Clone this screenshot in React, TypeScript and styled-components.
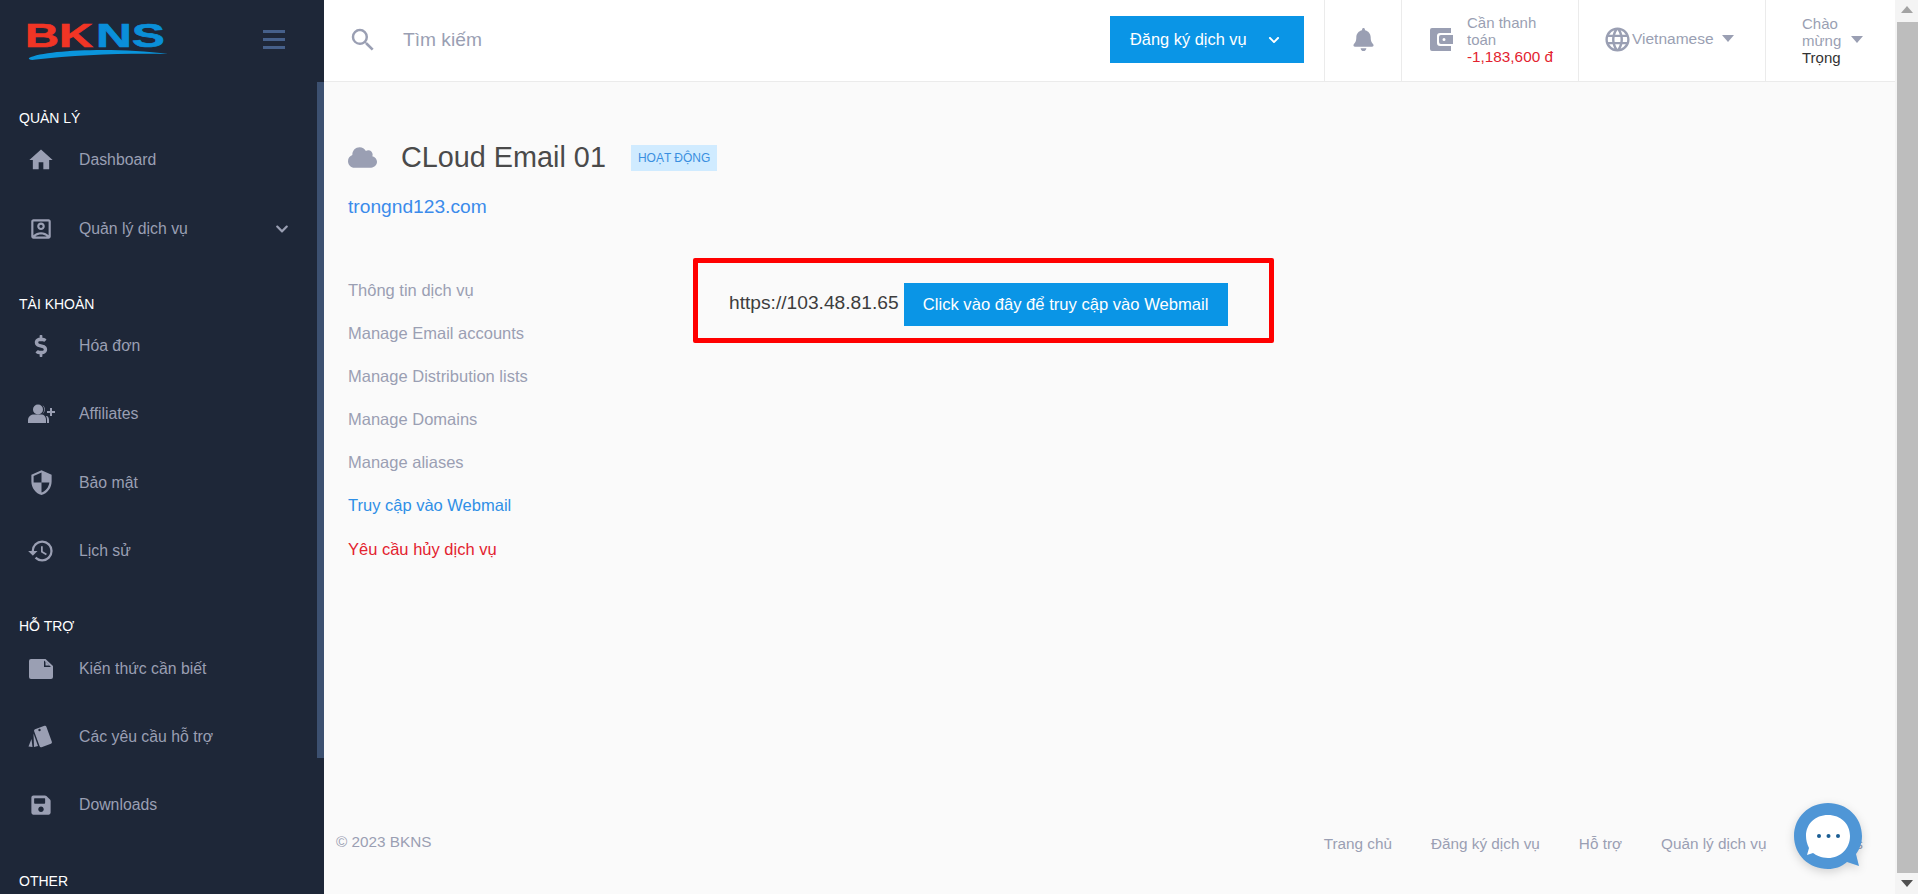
import React, { ReactNode } from "react";
import styled, { createGlobalStyle } from "styled-components";
import {
  FaBell,
  FaChevronDown,
  FaCloud,
  FaDollarSign,
  FaSave,
} from "react-icons/fa";
import {
  MdHistory,
  MdHome,
  MdLanguage,
  MdOutlineAccountBox,
  MdSearch,
  MdSecurity,
} from "react-icons/md";

// ========= Icons drawn by hand ==========
const AffiliatesIcon = () => (
  <svg width="28" height="20" viewBox="0 0 28 20" fill="currentColor">
    <circle cx="11" cy="5.5" r="5" />
    <path d="M1 19v-3c0-3.500 3-5.500 6-5.500h7c3 0 5 2 5 5.500v3H1z" />
    <path d="M15.500 1.200a5 5 0 0 1 0 8.500a6 6 0 0 0 0-8.500zM20 12c1.500 1 2 2.500 2 4v3h-2v-3.500c0-1.300-.3-2.500-1-3.500z" />
    <path d="M23 4h2v3h3v2h-3v3h-2V9h-3V7h3z" />
  </svg>
);

const NoteIcon = () => (
  <svg width="24" height="20" viewBox="0 0 24 20" fill="currentColor">
    <path d="M2 0h14.500L24 7v11a2 2 0 0 1-2 2H2a2 2 0 0 1-2-2V2a2 2 0 0 1 2-2z" />
    <path d="M15 1.500l0 6.500h7z" fill="#1e2738" />
    <path d="M16.500 2.500v4h4z" fill="currentColor" />
  </svg>
);

const CardsIcon = () => (
  <svg width="26" height="24" viewBox="0 0 26 24" fill="currentColor">
    <rect x="8.500" y="2" width="13" height="19" rx="1.500" transform="rotate(-20 15 11.500)" />
    <circle cx="11.500" cy="5" r="1.200" fill="#1e2738" />
    <path d="M5.500 8.500l4.500 12.500-4 1z" />
    <path d="M3.500 14l1 8-4-.5z" />
  </svg>
);

const WalletIcon = () => (
  <svg width="23" height="23" viewBox="0 0 23 23" fill="currentColor">
    <path d="M2 0h19v5H10a3 3 0 0 0-3 3v7a3 3 0 0 0 3 3h11v5H2a2 2 0 0 1-2-2V2a2 2 0 0 1 2-2z" />
    <path d="M11 7h12v9H11a2 2 0 0 1-2-2V9a2 2 0 0 1 2-2zm3 3a1.500 1.500 0 1 0 0 3 1.500 1.500 0 0 0 0-3z" />
  </svg>
);

const Logo = () => (
  <svg width="145" height="46" viewBox="0 0 145 46">
    <text
      x="0"
      y="29.5"
      fontFamily="'Liberation Sans', Arial, sans-serif"
      fontWeight="700"
      fontSize="33"
      textLength="68"
      lengthAdjust="spacingAndGlyphs"
      fill="#f13525"
      stroke="#f13525"
      strokeWidth="0.6"
    >
      BK
    </text>
    <text
      x="71"
      y="29.5"
      fontFamily="'Liberation Sans', Arial, sans-serif"
      fontWeight="700"
      fontSize="33"
      textLength="69"
      lengthAdjust="spacingAndGlyphs"
      fill="#0a8fd9"
      stroke="#0a8fd9"
      strokeWidth="0.6"
    >
      NS
    </text>
    <path d="M4 41C20 33 90 30 143 37C100 36 50 38 11 42.500C6 43.500 3 42.500 4 41z" fill="#0a95dc" />
  </svg>
);

const ChatBubble = () => (
  <svg width="70" height="68" viewBox="0 0 70 68">
    <path
      d="M34 0C53 0 68 14 68 33C68 41 65 47 62 51L65 63L53 59C47 64 41 66 34 66C15 66 0 52 0 33C0 14 15 0 34 0z"
      fill="#4f96d6"
    />
    <path
      d="M34 12C47 12 56 21 56 33C56 45 47 55 34 55C27 55 22 52 19 50L13 52L15 45C13 41 12 37 12 33C12 21 21 12 34 12z"
      fill="#fff"
    />
    <circle cx="25" cy="33" r="2" fill="#1b5e94" />
    <circle cx="34.500" cy="33" r="2" fill="#1b5e94" />
    <circle cx="44" cy="33" r="2" fill="#1b5e94" />
  </svg>
);

// ========= Page data ==========
interface NavEntry {
  label: string;
  icon: ReactNode;
  expandable?: boolean;
}

const NAV_SECTIONS: { title: string; items: NavEntry[] }[] = [
  {
    title: "QUẢN LÝ",
    items: [
      { label: "Dashboard", icon: <MdHome size={28} /> },
      {
        label: "Quản lý dịch vụ",
        icon: <MdOutlineAccountBox size={26} />,
        expandable: true,
      },
    ],
  },
  {
    title: "TÀI KHOẢN",
    items: [
      { label: "Hóa đơn", icon: <FaDollarSign size={22} /> },
      { label: "Affiliates", icon: <AffiliatesIcon /> },
      { label: "Bảo mật", icon: <MdSecurity size={27} /> },
      { label: "Lịch sử", icon: <MdHistory size={28} /> },
    ],
  },
  {
    title: "HỖ TRỢ",
    items: [
      { label: "Kiến thức cần biết", icon: <NoteIcon /> },
      { label: "Các yêu cầu hỗ trợ", icon: <CardsIcon /> },
      { label: "Downloads", icon: <FaSave size={22} /> },
    ],
  },
  { title: "OTHER", items: [] },
];

const SERVICE_LINKS = [
  "Thông tin dịch vụ",
  "Manage Email accounts",
  "Manage Distribution lists",
  "Manage Domains",
  "Manage aliases",
];

const FOOTER_LINKS = [
  "Trang chủ",
  "Đăng ký dịch vụ",
  "Hỗ trợ",
  "Quản lý dịch vụ",
  "Affiliates",
];

/**
 * Service detail page of the customer area
 */
const App = () => {
  return (
    <StyledPage>
      <GlobalStyle />

      {/* Start sidebar */}
      <StyledSidebar>
        <StyledBrand>
          <Logo />
          <StyledBurger>
            <span />
            <span />
            <span />
          </StyledBurger>
        </StyledBrand>

        {NAV_SECTIONS.map((section) => (
          <StyledNavSection key={section.title}>
            <StyledNavTitle>{section.title}</StyledNavTitle>
            {section.items.map((item) => (
              <StyledNavItem key={item.label}>
                <StyledNavIcon>{item.icon}</StyledNavIcon>
                <StyledNavLabel>{item.label}</StyledNavLabel>
                {item.expandable && <FaChevronDown size={14} />}
              </StyledNavItem>
            ))}
          </StyledNavSection>
        ))}
        <StyledSidebarThumb />
      </StyledSidebar>
      {/* End sidebar */}

      <StyledMain>
        {/* Start header */}
        <StyledHeader>
          <StyledSearch>
            <MdSearch size={30} />
            <span>Tìm kiếm</span>
          </StyledSearch>
          <StyledRegisterButton>
            Đăng ký dịch vụ
            <FaChevronDown size={12} />
          </StyledRegisterButton>
          <StyledBellCell>
            <FaBell size={23} />
          </StyledBellCell>
          <StyledPayCell>
            <WalletIcon />
            <StyledPayText>
              Cần thanh toán
              <StyledDebt>-1,183,600 đ</StyledDebt>
            </StyledPayText>
          </StyledPayCell>
          <StyledLanguageCell>
            <MdLanguage size={29} />
            <span>Vietnamese</span>
            <StyledCaret spacing={8} />
          </StyledLanguageCell>
          <StyledUserCell>
            <StyledUserText>
              Chào mừng
              <StyledUserName>Trọng</StyledUserName>
            </StyledUserText>
            <StyledCaret spacing={5} />
          </StyledUserCell>
        </StyledHeader>
        {/* End header */}

        {/* Start content */}
        <StyledContent>
          <StyledTitleRow>
            <FaCloud size={29} />
            <StyledTitle>CLoud Email 01</StyledTitle>
            <StyledBadge>HOẠT ĐỘNG</StyledBadge>
          </StyledTitleRow>
          <StyledDomain>trongnd123.com</StyledDomain>

          <StyledBody>
            <StyledServiceNav>
              {SERVICE_LINKS.map((link) => (
                <StyledServiceLink key={link} tone="muted">
                  {link}
                </StyledServiceLink>
              ))}
              <StyledServiceLink tone="active">Truy cập vào Webmail</StyledServiceLink>
              <StyledServiceLink tone="danger">Yêu cầu hủy dịch vụ</StyledServiceLink>
            </StyledServiceNav>

            <StyledWebmailBox>
              <StyledUrl>https://103.48.81.65</StyledUrl>
              <StyledWebmailButton>Click vào đây để truy cập vào Webmail</StyledWebmailButton>
            </StyledWebmailBox>
          </StyledBody>
        </StyledContent>
        {/* End content */}

        {/* Start footer */}
        <StyledFooter>
          <StyledCopyright>© 2023 BKNS</StyledCopyright>
          <StyledFooterLinks>
            {FOOTER_LINKS.map((link) => (
              <span key={link}>{link}</span>
            ))}
          </StyledFooterLinks>
        </StyledFooter>
        {/* End footer */}

        <StyledChatButton>
          <ChatBubble />
        </StyledChatButton>
      </StyledMain>

      {/* Page scrollbar */}
      <StyledScrollbar>
        <StyledArrow direction="up" />
        <StyledScrollThumb />
        <StyledArrow direction="down" />
      </StyledScrollbar>
    </StyledPage>
  );
};

export default App;

// ========= Start Styled Elements ==========
const GlobalStyle = createGlobalStyle`
  html, body {
    margin: 0;
    padding: 0;
    height: 100%;
    overflow: hidden;
    background: #fafafa;
    font-family: "Liberation Sans", Arial, sans-serif;
  }
  * {
    box-sizing: border-box;
  }
`;

const StyledPage = styled.div`
  display: flex;
  width: 1918px;
  height: 894px;
  overflow: hidden;
`;

const StyledSidebar = styled.aside`
  position: relative;
  flex: 0 0 324px;
  background: #1e2738;
  overflow: hidden;
`;

const StyledSidebarThumb = styled.div`
  position: absolute;
  top: 82px;
  right: 0;
  width: 7px;
  height: 676px;
  background: #3c5070;
`;

const StyledBrand = styled.div`
  display: flex;
  align-items: center;
  justify-content: space-between;
  height: 82px;
  padding: 0 39px 3px 25px;
`;

const StyledBurger = styled.div`
  display: flex;
  flex-direction: column;
  gap: 5px;
  width: 22px;

  span {
    height: 3px;
    background: #46608a;
  }
`;

const StyledNavSection = styled.div`
  margin-top: 33px;

  ${StyledBrand} + & {
    margin-top: 28px;
  }
`;

const StyledNavTitle = styled.div`
  height: 16px;
  padding-left: 19px;
  color: #fff;
  font-size: 14px;
  line-height: 16px;
`;

const StyledNavItem = styled.div`
  display: flex;
  align-items: center;
  height: 68.400px;
  padding: 0 35px 0 26px;
  color: #9a9fb3;
`;

const StyledNavIcon = styled.div`
  display: flex;
  align-items: center;
  justify-content: center;
  flex: 0 0 30px;
  margin-right: 23px;
`;

const StyledNavLabel = styled.span`
  flex: 1;
  font-size: 15.800px;
`;

const StyledMain = styled.main`
  position: relative;
  display: flex;
  flex: 1;
  flex-direction: column;
  min-width: 0;
`;

const StyledHeader = styled.header`
  display: flex;
  align-items: stretch;
  height: 82px;
  background: #fff;
  border-bottom: 1px solid #ebebeb;
`;

const StyledSearch = styled.div`
  display: flex;
  flex: 1;
  align-items: center;
  gap: 25px;
  padding: 0 0 1px 24px;
  color: #9a9fb3;
  font-size: 19.200px;
`;

const StyledRegisterButton = styled.button`
  display: flex;
  align-items: center;
  justify-content: space-between;
  align-self: flex-start;
  width: 194px;
  height: 47px;
  margin: 16px 20px 0 0;
  padding: 0 24px 0 20px;
  border: 0;
  background: #0a95e6;
  color: #fff;
  font-family: inherit;
  font-size: 16.400px;
`;

const StyledHeaderCell = styled.div`
  display: flex;
  flex: none;
  align-items: center;
  border-left: 1px solid #ebebeb;
  color: #9a9fb3;
  font-size: 15px;
`;

const StyledBellCell = styled(StyledHeaderCell)`
  justify-content: center;
  width: 77px;
  padding-bottom: 3px;
`;

const StyledPayCell = styled(StyledHeaderCell)`
  width: 177px;
  gap: 14px;
  padding-left: 28px;
  padding-bottom: 2px;
`;

const StyledPayText = styled.div`
  width: 100px;
  line-height: 17px;
`;

const StyledDebt = styled.div`
  color: #e3222f;
  font-size: 15.300px;
  white-space: nowrap;
`;

const StyledLanguageCell = styled(StyledHeaderCell)`
  width: 187px;
  padding-left: 24px;
  padding-bottom: 3px;
  font-size: 15.500px;
`;

const StyledUserCell = styled(StyledHeaderCell)`
  width: 130px;
  padding-left: 36px;
  padding-bottom: 1px;
`;

const StyledUserText = styled.div`
  width: 44px;
  line-height: 17px;
`;

const StyledUserName = styled.div`
  color: #333;
`;

const StyledCaret = styled.span<{ spacing: number }>`
  width: 0;
  height: 0;
  margin: 0 0 2px ${(props) => props.spacing}px;
  border-top: 7px solid #9a9fb3;
  border-left: 6px solid transparent;
  border-right: 6px solid transparent;
`;

const StyledContent = styled.section`
  flex: 1;
  padding: 62px 0 0 24px;
`;

const StyledTitleRow = styled.div`
  display: flex;
  align-items: center;
  height: 26px;
  color: #9a9fb3;
`;

const StyledTitle = styled.h1`
  margin: 0 25px 0 24px;
  color: #4a4a4a;
  font-size: 28.800px;
  font-weight: 400;
`;

const StyledBadge = styled.span`
  margin-top: 2px;
  padding: 0 7px;
  background: #d0ebff;
  color: #3a8fe0;
  font-size: 12px;
  line-height: 26px;
`;

const StyledDomain = styled.a`
  display: block;
  margin-top: 26px;
  color: #3b8beb;
  font-size: 19.200px;
  line-height: 22px;
`;

const StyledBody = styled.div`
  display: flex;
  margin-top: 40px;
`;

const StyledServiceNav = styled.nav`
  display: flex;
  flex: 0 0 345px;
  flex-direction: column;
  padding-top: 11px;
`;

const SERVICE_TONES = {
  muted: "#9a9fb3",
  active: "#2f8fe6",
  danger: "#e3222f",
};

const StyledServiceLink = styled.a<{ tone: keyof typeof SERVICE_TONES }>`
  color: ${(props) => SERVICE_TONES[props.tone]};
  font-size: 16.500px;
  line-height: 43.100px;
`;

const StyledWebmailBox = styled.div`
  display: flex;
  align-items: center;
  gap: 5px;
  width: 581px;
  height: 85px;
  padding: 8px 0 0 31px;
  border: 5px solid #ff0000;
  border-radius: 2px;
`;

const StyledUrl = styled.span`
  margin-bottom: 3px;
  color: #3d3d3d;
  font-size: 19.200px;
`;

const StyledWebmailButton = styled.button`
  width: 324px;
  height: 43px;
  padding: 0;
  border: 0;
  background: #0a95e6;
  color: #fff;
  font-family: inherit;
  font-size: 16.600px;
`;

const StyledFooter = styled.footer`
  display: flex;
  align-items: center;
  justify-content: space-between;
  padding: 0 32px 39px 12px;
  color: #9a9fb3;
  font-size: 15.300px;
`;

const StyledCopyright = styled.span`
  margin-bottom: 4px;
`;

const StyledFooterLinks = styled.div`
  display: flex;
  gap: 39px;
`;

const StyledChatButton = styled.div`
  position: absolute;
  right: 31px;
  bottom: 23px;
  display: flex;
  filter: drop-shadow(0 3px 5px rgba(0, 0, 0, 0.16));
`;

const StyledScrollbar = styled.div`
  display: flex;
  flex: 0 0 23px;
  flex-direction: column;
  align-items: flex-end;
  background: #f4f4f4;
`;

const StyledArrow = styled.div<{ direction: "up" | "down" }>`
  align-self: center;
  width: 0;
  height: 0;
  margin: ${(props) => (props.direction === "up" ? "6px 0 9px" : "7px 0")};
  border-left: 6px solid transparent;
  border-right: 6px solid transparent;
  border-bottom: ${(props) => (props.direction === "up" ? "7px solid #a3a3a3" : "0")};
  border-top: ${(props) => (props.direction === "down" ? "7px solid #505050" : "0")};
`;

const StyledScrollThumb = styled.div`
  flex: 1;
  width: 21px;
  background: #bdbdbd;
`;
// ========= End Styled Elements ==========
